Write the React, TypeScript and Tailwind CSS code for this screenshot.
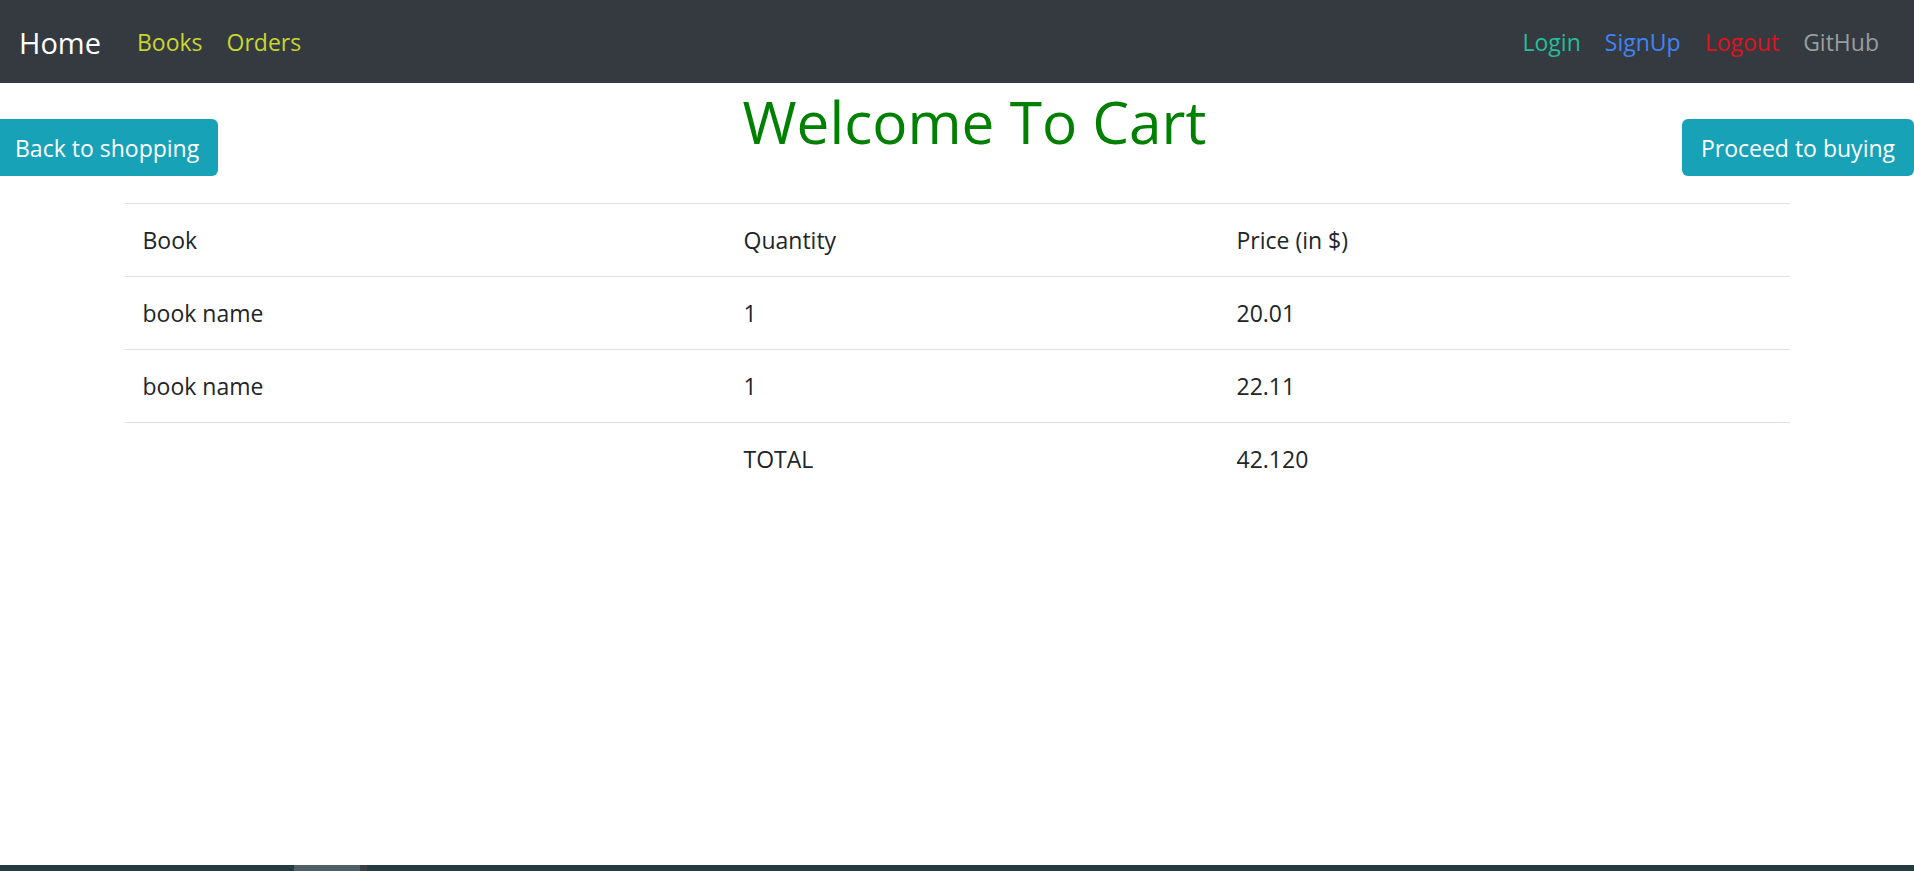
const font = "font-['Open_Sans',_'Noto_Sans',_sans-serif]";

const rows = [
  { name: "book name", qty: "1", price: "20.01" },
  { name: "book name", qty: "1", price: "22.11" },
];

function Row({ cells }: { cells: string[] }) {
  return (
    <div className="grid grid-cols-[601px_493px_1fr] border-t border-[#dee2e6]">
      {cells.map((c, i) => (
        <div key={i} className="px-[18px] py-[18px] leading-[36px] text-[23px] text-[#212529]">
          {c}
        </div>
      ))}
    </div>
  );
}

export default function App() {
  return (
    <div className={`flex h-screen flex-col bg-white ${font}`}>
      <nav className="flex h-[83px] items-center bg-[#343a40] pt-[2px] pl-[19px] pr-[23px]">
        <a className="mr-[24px] text-[29px] leading-[45px] text-white">Home</a>
        <a className="px-[12px] text-[23px] text-[#c9d530]">Books</a>
        <a className="px-[12px] text-[23px] text-[#c9d530]">Orders</a>
        <div className="ml-auto flex items-center text-[23px]">
          <a className="px-[12px] text-[#27bd9c]">Login</a>
          <a className="px-[12px] text-[#4283f5]">SignUp</a>
          <a className="px-[12px] text-[#e0111c]">Logout</a>
          <a className="px-[12px] text-[#9a9da0]">GitHub</a>
        </div>
      </nav>

      <div className="flex items-start">
        <button className="mt-[36px] w-[218px] rounded-r-[6px] bg-[#17a2b8] py-[10.5px] pl-[15px] text-left text-[23px] leading-[36px] text-white">
          Back to shopping
        </button>
        <h1 className="mt-[2px] flex-1 pl-[49px] text-center text-[58.5px] leading-[72px] text-[#008000]">
          Welcome To Cart
        </h1>
        <button className="mt-[36px] w-[232px] rounded-[6px] bg-[#17a2b8] py-[10.5px] text-center text-[23px] leading-[36px] text-white">
          Proceed to buying
        </button>
      </div>

      <div className="mx-auto mt-[27px] w-[1665px]">
        <Row cells={["Book", "Quantity", "Price (in $)"]} />
        {rows.map((r, i) => (
          <Row key={i} cells={[r.name, r.qty, r.price]} />
        ))}
        <Row cells={["", "TOTAL", "42.120"]} />
      </div>

      <div className="mt-auto flex h-[6px]">
        <div className="w-[294px] bg-[#233b42]" />
        <div className="w-[66px] bg-[#4e6066]" />
        <div className="w-[7px] bg-[#3a3f44]" />
        <div className="flex-1 bg-[#233b42]" />
      </div>
    </div>
  );
}
